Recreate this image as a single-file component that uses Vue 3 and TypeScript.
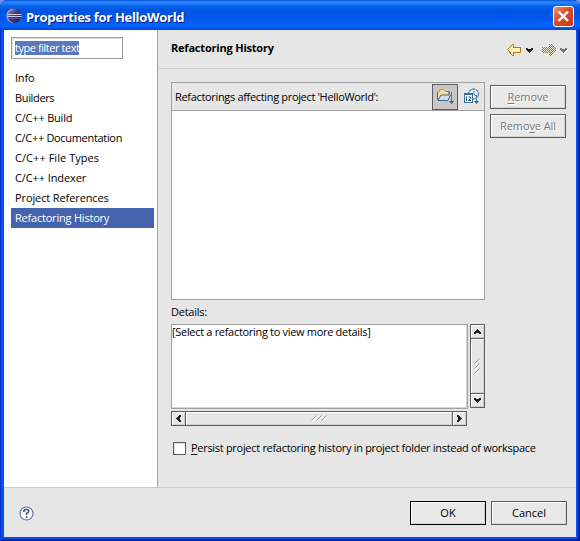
<script setup lang="ts">
import { ref } from 'vue'

interface Page {
  label: string
  spacing: string
}

const pages: Page[] = [
  { label: 'Info', spacing: '-0.2px' },
  { label: 'Builders', spacing: '-0.35px' },
  { label: 'C/C++ Build', spacing: '-0.2px' },
  { label: 'C/C++ Documentation', spacing: '-0.32px' },
  { label: 'C/C++ File Types', spacing: '0.05px' },
  { label: 'C/C++ Indexer', spacing: '-0.1px' },
  { label: 'Project References', spacing: '-0.11px' },
  { label: 'Refactoring History', spacing: '-0.21px' },
]
const selected = ref('Refactoring History')
</script>

<template>
  <div class="window">
    <header class="titlebar">
      <svg class="logo" width="16" height="16" viewBox="0 0 16 16">
        <defs>
          <linearGradient id="orb" x1="0" y1="0" x2="1" y2="1">
            <stop offset="0" stop-color="#a99bc4" />
            <stop offset=".4" stop-color="#4a3f86" />
            <stop offset="1" stop-color="#191350" />
          </linearGradient>
        </defs>
        <path d="M5 1 A7.3 7.3 0 0 0 5 14.5 L7 15 V.5Z" fill="#b7a8bd" />
        <circle cx="8.4" cy="7.8" r="7" fill="url(#orb)" />
        <path d="M1.5 6.5H15.5M1.2 8.5H15.5" stroke="#c8c9ed" />
        <path d="M2 10.5H15" stroke="#5a4f8f" />
      </svg>
      <span class="title">Properties for HelloWorld</span>
      <button class="close" aria-label="Close">
        <svg width="21" height="21" viewBox="0 0 21 21"><path d="M5.5 5.5L15 15M15 5.5L5.5 15" stroke="#fff" stroke-width="2.4" /></svg>
      </button>
    </header>
    <div class="client">
      <main class="body">
        <nav class="side">
          <div class="filter"><span>type filter text</span></div>
          <ul>
            <li v-for="p in pages" :key="p.label" :class="{ active: p.label === selected }" :style="{ letterSpacing: p.spacing }" @click="selected = p.label">{{ p.label }}</li>
          </ul>
        </nav>
        <section class="page">
          <div class="page-head">
            <h1>Refactoring History</h1>
            <svg width="62" height="16" viewBox="0 0 62 16" shape-rendering="crispEdges">
              <defs>
                <pattern id="dither" width="2" height="2" patternUnits="userSpaceOnUse">
                  <rect width="2" height="2" fill="#eee5cf" /><path d="M0 0h1v1H0zM1 1h1v1H1z" fill="#8f7850" />
                </pattern>
              </defs>
              <path d="M.5 7.500L5.500 2.500H6.500V5.500H13.500V10.500H6.500V13.500H5.500Z" fill="#fff1bd" stroke="#b47b13" />
              <path d="M19 6h2v1h3V6h2v2h-1v1h-1v1h-1v1h-1v-1h-1V9h-1V8h-1z" fill="#222" />
              <path d="M35 5h7V2h2l5 5v2l-5 5h-2v-3h-7z" fill="url(#dither)" />
              <path d="M54 7h2v1h3V7h2v2h-1v1h-1v1h-1v1h-1v-1h-1v-1h-1V9h-1z" fill="#fff" />
              <path d="M53 6h2v1h3V6h2v2h-1v1h-1v1h-1v1h-1v-1h-1V9h-1V8h-1z" fill="#777" />
            </svg>
          </div>
          <div class="page-body">
            <div class="history">
              <div class="group">
                <div class="group-head">
                  <span class="affect">Refactorings affecting project 'HelloWorld':</span>
                  <button class="tool on" aria-label="Group by project">
                    <svg width="18" height="17" viewBox="0 0 18 17">
                      <path d="M1.500 11.500V4.500L3 3.500L4 1.500H8L9.500 3.500H12.500V6" fill="#f9db91" stroke="#b69254" />
                      <path d="M1.500 4.500V11.500" stroke="#3c6aa0" />
                      <path d="M2 12.500L5 7H14.500L12 12.500Z" fill="#c9e1f6" stroke="#3c6aa0" />
                      <path d="M10 3.500H13.500V6M15.500 4V14" stroke="#5480b0" fill="none" />
                      <path d="M13 13h5l-2.500 3z" fill="#555" />
                    </svg>
                  </button>
                  <button class="tool date" aria-label="Sort by date">
                    <svg width="18" height="17" viewBox="0 0 18 17">
                      <circle cx="10.500" cy="6" r="5" fill="#f5fcff" stroke="#4c83ae" stroke-width="1.300" stroke-dasharray="3 .6" />
                      <path d="M11 3V6.500L13 8" stroke="#3977a8" fill="none" />
                      <rect x="1.500" y="5.500" width="8" height="9" fill="#fff" stroke="#3771a2" />
                      <path d="M1 6H10" stroke="#3771a2" stroke-width="2" />
                      <path d="M3.500 8.500V13M5.500 9H7.500V10.500L5.500 12.500H8" stroke="#1c4970" fill="none" />
                      <path d="M13.500 7V14" stroke="#5480b0" />
                      <path d="M11 13h5l-2.500 3z" fill="#555" />
                    </svg>
                  </button>
                </div>
                <div class="group-list"></div>
              </div>
              <div class="actions">
                <button class="btn disabled"><u>R</u>emove</button>
                <button class="btn disabled">Remo<u>v</u>e All</button>
              </div>
            </div>
            <div class="details-label">Details:</div>
            <div class="details">
              <div class="area">[Select a refactoring to view more details]</div>
              <div class="bar vertical">
                <i class="cap"><svg width="9" height="5" viewBox="0 0 9 5" shape-rendering="crispEdges"><path d="M4 0h1v1h1v1h1v1h1v2H6V4H3v1H1V3h1V2h1V1h1z" /></svg></i>
                <i class="thumb"><svg width="7" height="17" viewBox="0 0 7 17"><path d="M1.500 6.500l5-5M1.500 11.500l5-5M1.500 16.500l5-5" stroke="#fff" /><path d="M.5 5.500l5-5M.5 10.500l5-5M.5 15.500l5-5" stroke="#999" /></svg></i>
                <i class="cap"><svg width="9" height="5" viewBox="0 0 9 5" shape-rendering="crispEdges"><path d="M1 0h2v1h3V0h2v2H7v1H6v1H5v1H4V4H3V3H2V2H1z" /></svg></i>
              </div>
              <div class="bar horizontal">
                <i class="cap"><svg width="5" height="9" viewBox="0 0 5 9" shape-rendering="crispEdges"><path d="M0 4h1V3h1V2h1V1h2v2H4v3h1v2H3V7H2V6H1V5H0z" /></svg></i>
                <i class="thumb"><svg width="17" height="7" viewBox="0 0 17 7"><path d="M1.500 6.500l5-5M6.500 6.500l5-5M11.500 6.500l5-5" stroke="#fff" /><path d="M.5 5.500l5-5M5.500 5.500l5-5M10.500 5.500l5-5" stroke="#999" /></svg></i>
                <i class="cap"><svg width="5" height="9" viewBox="0 0 5 9" shape-rendering="crispEdges"><path d="M0 1h2v1h1v1h1v1h1v1H4v1H3v1H2v1H0V6h1V3H0z" /></svg></i>
              </div>
            </div>
            <label class="persist"><span class="box"></span><span class="persist-text"><u>P</u>ersist project refactoring history in project folder instead of workspace</span></label>
          </div>
        </section>
      </main>
      <footer class="foot">
        <svg class="help" width="15" height="15" viewBox="0 0 15 15">
          <circle cx="7.500" cy="7.500" r="6.500" fill="#fff" stroke="#6379a5" stroke-width="1.200" />
          <path d="M5 6V4.500Q5.500 3.500 7.500 3.500Q9.700 3.500 9.700 5.200Q9.700 6.400 7.600 7.300V9M7.600 10.300V12" fill="none" stroke="#405a90" stroke-width="1.700" />
        </svg>
        <button class="btn default">OK</button>
        <button class="btn">Cancel</button>
      </footer>
    </div>
  </div>
</template>

<style>
body { margin: 0; background: #7b98e0; overflow: hidden; }
</style>

<style scoped>
* { box-sizing: border-box; }
button { padding: 0; font: inherit; color: inherit; }
svg { display: block; }
u { text-decoration-thickness: 1px; text-underline-offset: 2px; text-decoration-skip-ink: none; }
.window {
  width: 580px; height: 541px; display: flex; flex-direction: column; padding: 0 4px 4px;
  background: #0050ee; border-radius: 7px 7px 0 0; overflow: hidden;
  box-shadow: inset 1px 0 #0831d9, inset -2px 0 #001ea0, inset 0 -2px #001ea0;
  font: 11px/14px "Open Sans", "Noto Sans", sans-serif; color: #000;
}
.titlebar {
  height: 30px; flex: none; margin: 0 -4px; padding: 3px 6px 0; display: flex; align-items: center;
  background: linear-gradient(#0854d8 0, #2d83ff 2px, #2583ff 3px, #0865eb 6px, #0054e0 10px, #0058eb 18px, #0065ff 25px, #0060f8 27px, #0044cf 30px);
}
.title { margin-left: 4px; flex: 1; color: #fff; font: bold 13px/18px "Open Sans", sans-serif; letter-spacing: -.3px; text-shadow: 1px 1px #0a1883; white-space: nowrap; }
.logo { margin-top: -2px; }
.close { width: 21px; height: 21px; border: 1px solid #fff; border-radius: 3px; background: linear-gradient(135deg, #ef9377, #de4c26 45%, #c83510); }
.close svg { margin: -1px; }
.client { flex: 1; display: flex; flex-direction: column; background: #e6e6e6; }
.body { height: 458px; display: flex; border-bottom: 1px solid #c9c9c9; }
.side { width: 154px; background: #fff; border-right: 1px solid #a0a0a0; padding: 7px 3px 0 7px; }
.filter { width: 112px; height: 22px; border: 1px solid #9c9c9c; box-shadow: inset 1px 1px #e0e0e0; padding: 3px; line-height: 14px; }
.filter span { display: inline-block; height: 14px; background: #5c78b6; color: #fff; white-space: nowrap; letter-spacing: -.45px; }
ul { list-style: none; margin: 9px 0 0; padding: 0; }
li { height: 20px; padding-left: 4px; line-height: 20px; white-space: nowrap; }
li.active { background: #4664ae; color: #fff; }
.page { flex: 1; padding-left: 1px; }
.page-head { height: 39px; border-bottom: 1px solid #c9c9c9; display: flex; align-items: center; justify-content: space-between; padding: 2px 7px 0 12px; }
h1 { margin: -4px 0 0; font-size: 11px; line-height: 16px; letter-spacing: -.2px; white-space: nowrap; }
.page-body { padding: 13px 9px 0 12px; }
.history { display: flex; gap: 5px; }
.group { width: 314px; height: 218px; border: 1px solid #a0a0a0; display: flex; flex-direction: column; }
.group-head { height: 28px; display: flex; align-items: center; border-bottom: 1px solid #a0a0a0; padding-left: 3px; }
.affect { flex: 1; white-space: nowrap; letter-spacing: -.33px; }
.tool { width: 26px; height: 26px; border: 1px solid transparent; background: none; display: grid; place-items: center; }
.tool.on { border-color: #5c5c5c; background: #c7c7c7; }
.tool.date { padding-left: 2px; }
.group-list { flex: 1; background: #fff; }
.actions { display: flex; flex-direction: column; gap: 5px; padding-top: 3px; }
.btn { width: 76px; height: 24px; border: 1px solid #5c5c5c; background: #e9e9e9; box-shadow: inset 1px 1px #fff, inset -1px -1px #d4d4d4; white-space: nowrap; line-height: 20px; }
.btn.default { border-color: #000; }
.btn.disabled { color: #777; text-shadow: 1px 1px #fff; letter-spacing: -.1px; }
.details-label { height: 24px; line-height: 24px; letter-spacing: -.25px; }
.details { width: 314px; display: grid; grid-template: 85px 15px / 297px 15px; gap: 2px; }
.area { background: #fff; border: 1px solid #a0a0a0; box-shadow: inset -1px -1px #d8d8d8; padding: 0; letter-spacing: -.31px; white-space: nowrap; }
.bar { border: 1px solid #5c5c5c; background: #e6e6e6; display: flex; }
.vertical { flex-direction: column; height: 84px; }
.horizontal { width: 296px; }
.cap { flex: 0 0 13px; display: grid; place-items: center; box-shadow: inset 1px 1px #fff, inset -1px -1px #d0d0d0; }
.cap svg { fill: #222; }
.thumb { flex: 1; display: grid; place-items: center; box-shadow: inset 1px 1px #fff, inset -1px -1px #d0d0d0; }
.vertical .thumb { border: solid #5c5c5c; border-width: 1px 0; }
.horizontal .thumb { border: solid #5c5c5c; border-width: 0 1px; }
.persist { display: flex; align-items: center; height: 16px; margin-top: 14px; padding-left: 2px; }
.box { width: 13px; height: 13px; border: 1px solid #5c5c5c; background: #fff; box-shadow: inset 1px 1px #e0e0e0; }
.persist-text { margin-left: 5px; white-space: nowrap; letter-spacing: -.3px; }
.foot { flex: 1; display: flex; align-items: center; gap: 5px; padding: 1px 9px 0 15px; }
.help { margin-right: auto; }
</style>
